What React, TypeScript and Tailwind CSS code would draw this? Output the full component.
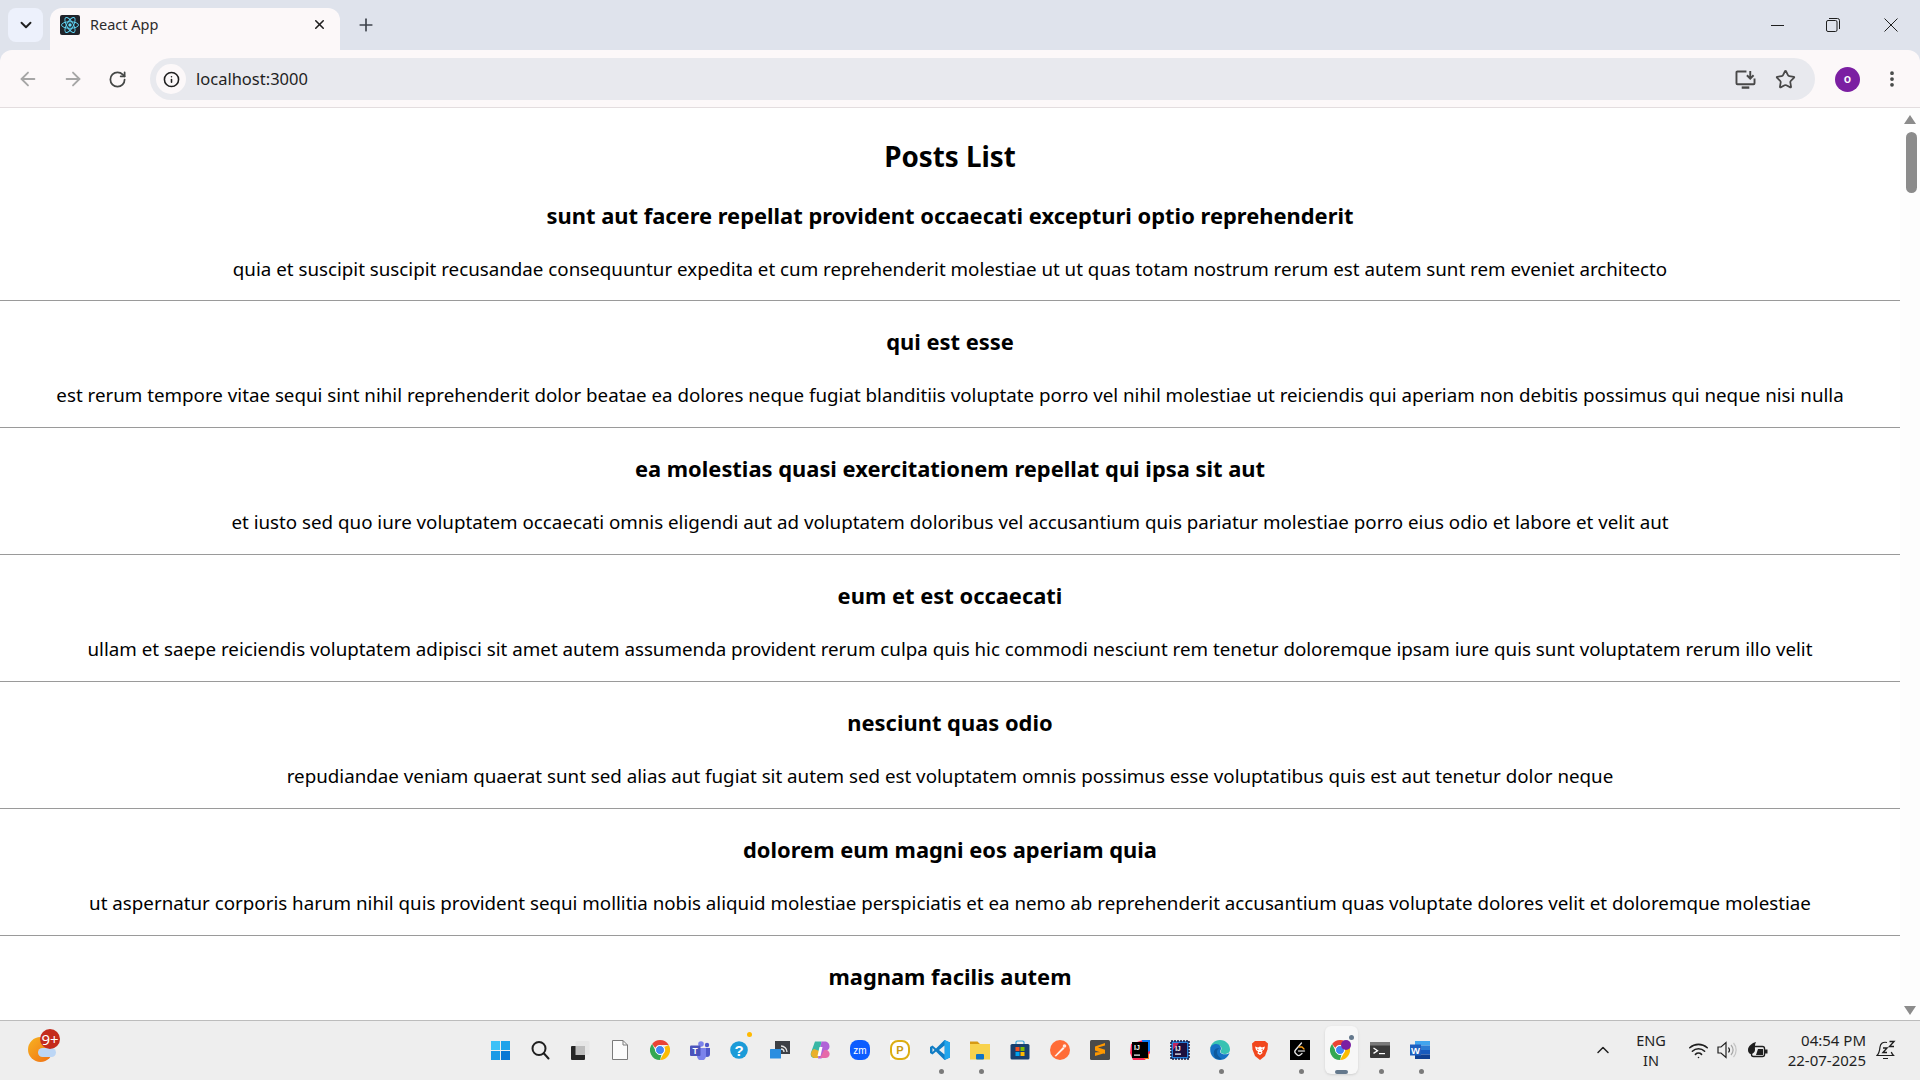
import React from 'react';
import { ArrowLeft, ArrowRight, ChevronDown, ChevronUp, Info, MoreVertical, Plus, RotateCw, Star, Wifi, X } from 'lucide-react';

const posts = [
  {
    title: 'sunt aut facere repellat provident occaecati excepturi optio reprehenderit',
    body: 'quia et suscipit suscipit recusandae consequuntur expedita et cum reprehenderit molestiae ut ut quas totam nostrum rerum est autem sunt rem eveniet architecto',
  },
  {
    title: 'qui est esse',
    body: 'est rerum tempore vitae sequi sint nihil reprehenderit dolor beatae ea dolores neque fugiat blanditiis voluptate porro vel nihil molestiae ut reiciendis qui aperiam non debitis possimus qui neque nisi nulla',
  },
  {
    title: 'ea molestias quasi exercitationem repellat qui ipsa sit aut',
    body: 'et iusto sed quo iure voluptatem occaecati omnis eligendi aut ad voluptatem doloribus vel accusantium quis pariatur molestiae porro eius odio et labore et velit aut',
  },
  {
    title: 'eum et est occaecati',
    body: 'ullam et saepe reiciendis voluptatem adipisci sit amet autem assumenda provident rerum culpa quis hic commodi nesciunt rem tenetur doloremque ipsam iure quis sunt voluptatem rerum illo velit',
  },
  {
    title: 'nesciunt quas odio',
    body: 'repudiandae veniam quaerat sunt sed alias aut fugiat sit autem sed est voluptatem omnis possimus esse voluptatibus quis est aut tenetur dolor neque',
  },
  {
    title: 'dolorem eum magni eos aperiam quia',
    body: 'ut aspernatur corporis harum nihil quis provident sequi mollitia nobis aliquid molestiae perspiciatis et ea nemo ab reprehenderit accusantium quas voluptate dolores velit et doloremque molestiae',
  },
  {
    title: 'magnam facilis autem',
    body: '',
  },
];

const ReactLogo = () => (
  <svg viewBox="0 0 20 20" className="w-5 h-5">
    <rect width="20" height="20" rx="2" fill="#20232a" />
    <circle cx="10" cy="10" r="1.7" fill="#61dafb" />
    <g fill="none" stroke="#61dafb" strokeWidth="0.9">
      <ellipse cx="10" cy="10" rx="8.5" ry="3.3" />
      <ellipse cx="10" cy="10" rx="8.5" ry="3.3" transform="rotate(60 10 10)" />
      <ellipse cx="10" cy="10" rx="8.5" ry="3.3" transform="rotate(120 10 10)" />
    </g>
  </svg>
);

const ChromeIcon = () => (
  <svg viewBox="0 0 20 20" className="w-5 h-5">
    <path d="M10 0a10 10 0 0 1 8.7 5H10a5 5 0 0 0-4.6 3L2.1 3.9A10 10 0 0 1 10 0z" fill="#ea4335" />
    <path d="M18.7 5A10 10 0 0 1 10 20l4.3-7.5A5 5 0 0 0 14.3 7z" fill="#fbbc04" />
    <path d="M10 20A10 10 0 0 1 2.1 3.9l4.3 8.6a5 5 0 0 0 5 2.3z" fill="#34a853" />
    <circle cx="10" cy="10" r="4.5" fill="#4285f4" stroke="#fff" strokeWidth="1" />
  </svg>
);

const TeamsIcon = () => (
  <svg viewBox="0 0 20 20" className="w-5 h-5">
    <circle cx="11" cy="4" r="2.8" fill="#7b83eb" />
    <circle cx="17" cy="5" r="2.2" fill="#5059c9" />
    <path d="M14 8h6v6a3 3 0 0 1-6 0z" fill="#5059c9" />
    <path d="M7 8h9v8a4 4 0 0 1-9 0z" fill="#7b83eb" />
    <rect x="0" y="5.5" width="10.5" height="10.5" rx="1" fill="#4b53bc" />
    <text x="5.2" y="14" textAnchor="middle" fontSize="8.5" fontWeight="700" fill="#fff" fontFamily="Liberation Sans">T</text>
  </svg>
);

const HelpIcon = () => (
  <svg viewBox="0 0 20 20" className="w-5 h-5">
    <circle cx="9" cy="10" r="8.8" fill="#1b9bd8" />
    <text x="9" y="15.5" textAnchor="middle" fontSize="15" fontWeight="700" fill="#fff" fontFamily="Liberation Sans">?</text>
  </svg>
);

const CastIcon = () => (
  <svg viewBox="0 0 20 20" className="w-5 h-5">
    <rect x="5" y="1" width="15" height="13" fill="#3d4045" />
    <path d="M11 6a6 6 0 0 1 6 6M11 9a3 3 0 0 1 3 3" fill="none" stroke="#e5e5e5" strokeWidth="1.3" />
    <rect x="0" y="9" width="11" height="9.5" rx="0.5" fill="#2a8ee0" />
  </svg>
);

const CopilotIcon = () => (
  <svg viewBox="0 0 20 20" className="w-5 h-5">
    <path d="M5 1.5h6.5L8 18H4.5C1.5 18 0 15.5 1 12.5z" fill="#38b7a5" />
    <path d="M4 9c-2 1-3 3-3 5 0 2.500 2 4 4 4h3l1.500-7z" fill="#e9b02c" />
    <path d="M11.500 1.500h3c3 0 5 2 5 5 0 2-1 3-2 3.500l-6 8.500H8z" fill="#b063d8" />
    <path d="M14 10h3c2 1 3 3 2.500 5-.5 2-2 3-4 3H10z" fill="#e66aa9" />
    <path d="M9.500 7h3l-2 9h-3z" fill="#fff" />
  </svg>
);

const ZoomIcon = () => (
  <svg viewBox="0 0 20 20" className="w-5 h-5">
    <rect width="20" height="20" rx="8" fill="#0b5cff" />
    <text x="10" y="13.5" textAnchor="middle" fontSize="10" fill="#fff" fontFamily="Liberation Sans">zm</text>
  </svg>
);

const ParkingIcon = () => (
  <svg viewBox="0 0 20 20" className="w-5 h-5">
    <rect width="20" height="20" fill="#fff" />
    <rect x="1" y="1" width="18" height="18" rx="7" fill="#fff" stroke="#dcae12" strokeWidth="2" />
    <text x="10" y="14.300" textAnchor="middle" fontSize="11" fontWeight="700" fill="#c99a10" fontFamily="Liberation Sans">P</text>
  </svg>
);

const VsCodeIcon = () => (
  <svg viewBox="0 0 20 20" className="w-5 h-5">
    <path d="M14.500 0 20 2.500v15L14.500 20 6 11.500 2.500 14.500 0 13V7l2.500-1.500L6 8.500z" fill="#0f7cc4" />
    <path d="M14.500 0 20 2.500v15L14.500 20z" fill="#22a5ec" />
    <path d="M14.500 5.500v9L9 10z" fill="#eeeeee" />
    <path d="M2.500 8v4L4.500 10z" fill="#eeeeee" />
  </svg>
);

const FolderIcon = () => (
  <svg viewBox="0 0 20 20" className="w-5 h-5">
    <path d="M0 1.500h7.500L10 4h10v4H0z" fill="#d69a14" />
    <rect x="0" y="4" width="20" height="15.500" fill="#f8d24d" />
    <rect x="6" y="14" width="8" height="5.500" rx="1" fill="#1173c7" />
  </svg>
);

const StoreIcon = () => (
  <svg viewBox="0 0 20 20" className="w-5 h-5">
    <path d="M6 4V2a2 2 0 0 1 2-1h4a2 2 0 0 1 2 1v2" fill="none" stroke="#3ca6dc" strokeWidth="1.200" />
    <rect x="0.500" y="4" width="19" height="15.500" rx="1.500" fill="#18406f" />
    <rect x="5.500" y="7" width="4" height="4" fill="#f25022" />
    <rect x="10.500" y="7" width="4" height="4" fill="#7fba00" />
    <rect x="5.500" y="12" width="4" height="4" fill="#00a4ef" />
    <rect x="10.500" y="12" width="4" height="4" fill="#ffb900" />
  </svg>
);

const PostmanIcon = () => (
  <svg viewBox="0 0 20 20" className="w-5 h-5">
    <circle cx="10" cy="10" r="10" fill="#ff6c37" />
    <path d="M4.500 16 13 7l1.500 1.500L6 16.500z" fill="#fff" opacity="0.9" />
    <circle cx="14.500" cy="6" r="1.800" fill="#fff" opacity="0.85" />
  </svg>
);

const SublimeIcon = () => (
  <svg viewBox="0 0 20 20" className="w-5 h-5">
    <rect width="20" height="20" rx="1.500" fill="#4a4a4a" />
    <path d="M15 3 5 6.500v4l10 3.400V9.700L8 7.500l7-2zM5 12.500v3.500L15 13l-3-1.200z" fill="#ff9800" />
  </svg>
);

const IdeaIcon = () => (
  <svg viewBox="0 0 20 20" className="w-5 h-5">
    <path d="M1 4 13 0h7v13l-5 7H3L0 13z" fill="#fe2857" />
    <path d="M12 0h8v11l-6 2z" fill="#087cfa" />
    <rect x="14" y="14" width="5" height="5" fill="#fe7a16" />
    <rect x="2" y="2" width="16" height="16" fill="#000" />
    <text x="7" y="10" textAnchor="middle" fontSize="7" fontWeight="700" fill="#fff" fontFamily="Liberation Sans">IJ</text>
    <rect x="4" y="14.500" width="6" height="1.200" fill="#fff" />
  </svg>
);

const RiderIcon = () => (
  <svg viewBox="0 0 20 20" className="w-5 h-5">
    <rect x="1" y="1" width="18" height="18" fill="#2a7fd8" stroke="#1a1a40" strokeWidth="1.500" strokeDasharray="2 1" />
    <rect x="3" y="3" width="14" height="14" fill="#1d0f3f" />
    <path d="M3 3h6L3 10z" fill="#c0275f" />
    <text x="8" y="10.500" textAnchor="middle" fontSize="6.500" fontWeight="700" fill="#fff" fontFamily="Liberation Sans">IJ</text>
    <rect x="5" y="13.500" width="6" height="1.200" fill="#fff" />
  </svg>
);

const EdgeIcon = () => (
  <svg viewBox="0 0 20 20" className="w-5 h-5">
    <path d="M10 0c6 0 10 4.500 10 9.500 0 3-2.500 4.500-5.500 4.500-2 0-4-1-4-2.500 0-1 1-1.200 1-3C11.500 6 9 4.500 6.500 5 3 5.500.5 8 .2 9 .5 4 4.500 0 10 0z" fill="#38c2b2" />
    <path d="M.2 9.500C.2 5.500 4 3.800 6.500 4c3 .2 4.500 2.500 4.500 4.500 0 1.500-1 2-1 3 0 2 3 3 5.500 2.800 1.500 0 3-.5 4-1.500C18 17.500 14.500 20 10 20 4.500 20 .2 15.500.2 9.500z" fill="#1673c5" />
    <path d="M6 18.500C3.500 16 3 12 5 9.500c1-1 3-1.500 4.500-1-2.500.500-3 3.500-2 6 .7 1.800 2 3 4.500 4.500-2 .5-4.300.3-6-.5z" fill="#0f5a9e" />
  </svg>
);

const BraveIcon = () => (
  <svg viewBox="0 0 20 20" className="w-5 h-5">
    <path d="M5 1h10l3 2.500-.5 6L15 16l-5 4-5-4-2.500-6.500L2 3.500z" fill="#f1471d" />
    <path d="M5 6.500 8 7.500l2-1 2 1 3-1-1 3-2 1.500 .5 2L10 15l-2.500-1.500.5-2-2-1.500z" fill="#fff" />
    <path d="M7 8.500 9 9.500l-1.500 .5zM13 8.500 11 9.500l1.500 .5zM8.500 12h3L10 13.500z" fill="#f1471d" />
  </svg>
);

const LeetcodeIcon = () => (
  <svg viewBox="0 0 20 20" className="w-5 h-5">
    <rect width="20" height="20" fill="#000" />
    <path d="M11.500 3 5.500 10c-.8 1-.8 2.500 0 3.300l1.500 1.500c1 1 2.500 1 3.500 0L12 13.500" fill="none" stroke="#e5e5e5" strokeWidth="1.300" strokeLinecap="round" />
    <path d="M8.500 11h6" stroke="#b3b3b3" strokeWidth="1.300" strokeLinecap="round" />
    <path d="M9 7l3 0 2 2" fill="none" stroke="#ffa116" strokeWidth="1.300" strokeLinecap="round" />
  </svg>
);

const ChromeProfileIcon = () => (
  <div className="relative w-5 h-5">
    <ChromeIcon />
    <span className="absolute top-0 -right-[1px] w-[10px] h-[10px] rounded-full bg-[#7b1fa2]" />
    <span className="absolute -top-[5px] -right-[4px] w-[5px] h-[5px] rounded-full bg-[#64788c]" />
  </div>
);

const TerminalIcon = () => (
  <svg viewBox="0 0 20 20" className="w-5 h-5">
    <rect y="2" width="20" height="16" rx="1" fill="#3a3a3a" />
    <rect y="2" width="20" height="3.500" fill="#7a7a7a" />
    <path d="m3.500 8 4 2.700-4 2.700" fill="none" stroke="#fff" strokeWidth="1.300" />
    <rect x="9" y="13" width="6" height="1.200" fill="#fff" />
  </svg>
);

const WordIcon = () => (
  <svg viewBox="0 0 20 20" className="w-5 h-5">
    <rect x="5" y="1" width="15" height="4.500" fill="#41a5ee" />
    <rect x="5" y="5.500" width="15" height="4.500" fill="#2b7cd3" />
    <rect x="5" y="10" width="15" height="4.500" fill="#185abd" />
    <rect x="5" y="14.500" width="15" height="4.500" fill="#103f91" />
    <rect x="0" y="4.500" width="11" height="11" fill="#1e5fbf" />
    <text x="5.500" y="13.500" textAnchor="middle" fontSize="9.500" fontWeight="700" fill="#fff" fontFamily="Liberation Sans">W</text>
  </svg>
);

const taskbarIcons: { key: string; icon: React.ReactNode; dot?: boolean; active?: boolean; notify?: boolean }[] = [
  {
    key: 'start',
    icon: (
      <div className="grid grid-cols-2 gap-[1px] w-[19px] h-[19px]">
        <span className="bg-[#3cc1f7]" />
        <span className="bg-[#1ea3ea]" />
        <span className="bg-[#1a9ae6]" />
        <span className="bg-[#0a78d4]" />
      </div>
    ),
  },
  {
    key: 'search',
    icon: (
      <svg viewBox="0 0 20 20" className="w-5 h-5" fill="none" stroke="#1f1f1f" strokeWidth="2">
        <circle cx="9" cy="8.500" r="6.500" />
        <path d="m14 13.500 4.500 5" strokeLinecap="round" />
      </svg>
    ),
  },
  {
    key: 'taskview',
    icon: (
      <svg viewBox="0 0 20 20" className="w-5 h-5">
        <rect x="5.500" y="1" width="14" height="14" rx="1" fill="#e6e6e6" />
        <rect x="1" y="6" width="14" height="14" rx="1" fill="#262626" />
        <rect x="5.500" y="6" width="9.500" height="9" fill="#bdbdbd" />
      </svg>
    ),
  },
  {
    key: 'file',
    icon: (
      <svg viewBox="0 0 20 20" className="w-5 h-5">
        <path d="M2.500.5h10.500l4.500 4.500v14.500h-15z" fill="#fbfbfb" stroke="#7a7a7a" />
        <path d="M13 .5V5h4.500" fill="none" stroke="#7a7a7a" />
      </svg>
    ),
  },
  { key: 'chrome', icon: <ChromeIcon /> },
  { key: 'teams', icon: <TeamsIcon /> },
  { key: 'help', icon: <HelpIcon />, notify: true },
  { key: 'cast', icon: <CastIcon /> },
  { key: 'copilot', icon: <CopilotIcon /> },
  { key: 'zoom', icon: <ZoomIcon /> },
  { key: 'parking', icon: <ParkingIcon /> },
  { key: 'vscode', icon: <VsCodeIcon />, dot: true },
  { key: 'folder', icon: <FolderIcon />, dot: true },
  { key: 'store', icon: <StoreIcon /> },
  { key: 'postman', icon: <PostmanIcon /> },
  { key: 'sublime', icon: <SublimeIcon /> },
  { key: 'idea', icon: <IdeaIcon /> },
  { key: 'rider', icon: <RiderIcon /> },
  { key: 'edge', icon: <EdgeIcon />, dot: true },
  { key: 'brave', icon: <BraveIcon /> },
  { key: 'leetcode', icon: <LeetcodeIcon />, dot: true },
  { key: 'chrome2', icon: <ChromeProfileIcon />, active: true },
  { key: 'terminal', icon: <TerminalIcon />, dot: true },
  { key: 'word', icon: <WordIcon />, dot: true },
];

const TabStrip = () => (
  <div className="h-[50px] bg-[#dfe3ec] flex shrink-0 pt-2">
    <div className="ml-2 w-[35px] h-[34px] rounded-lg bg-[#edf1fc] flex items-center justify-center">
      <ChevronDown className="w-[18px] h-[18px] text-[#1f1f1f]" strokeWidth={2.500} />
    </div>
    <div className="ml-[7px] w-[290px] h-[42px] rounded-t-xl bg-[#fcf8f9] flex items-center pl-[10px] pr-[13px] pb-[9px]">
      <ReactLogo />
      <span className="ml-[10px] text-[14.500px] text-[#2c2c2c] flex-1">React App</span>
      <X className="w-[15px] h-[15px] text-[#1f1f1f]" strokeWidth={2.500} />
    </div>
    <div className="ml-[9px] w-[34px] h-[34px] flex items-center justify-center">
      <Plus className="w-5 h-5 text-[#3f444c]" strokeWidth={2} />
    </div>
    <div className="ml-auto flex h-[34px] items-center">
      <div className="w-[56px] flex justify-center">
        <div className="w-[13px] h-[1px] bg-[#1f1f1f]" />
      </div>
      <div className="w-[56px] flex justify-center mr-[1px]">
        <svg viewBox="0 0 14 14" className="w-[14px] h-[14px]" fill="none" stroke="#1f1f1f">
          <rect x="0.500" y="2.500" width="10.500" height="11" rx="1.500" />
          <path d="M3 .5h8.500a2 2 0 0 1 2 2V11" />
        </svg>
      </div>
      <div className="w-[58px] flex justify-center">
        <svg viewBox="0 0 14 14" className="w-[14px] h-[14px]" fill="none" stroke="#1f1f1f">
          <path d="m.5.5 13 13m0-13-13 13" />
        </svg>
      </div>
    </div>
  </div>
);

const Toolbar = () => (
  <div className="bg-[#dfe3ec] shrink-0">
    <div className="h-[58px] bg-[#fcf8f9] rounded-t-xl border-b border-[#e3dddf] flex items-center pt-[1px]">
      <div className="w-[150px] flex items-center">
        <ArrowLeft className="ml-[17px] w-[22px] h-[22px] text-[#a6a6a6]" strokeWidth={2} />
        <ArrowRight className="ml-[23px] w-[22px] h-[22px] text-[#a6a6a6]" strokeWidth={2} />
        <RotateCw className="ml-[24px] w-[19px] h-[19px] text-[#444746]" strokeWidth={2.200} />
      </div>
      <div className="w-[1665px] h-[42px] rounded-full bg-[#e8e9ee] flex items-center pl-[6px] pr-[17px]">
        <div className="w-[30px] h-[30px] rounded-full bg-[#fcf8f9] flex items-center justify-center">
          <Info className="w-[17px] h-[17px] text-[#1f1f1f]" strokeWidth={2.200} />
        </div>
        <span className="ml-[10px] text-[16.500px] text-[#1f1f1f] flex-1">localhost:3000</span>
        <svg viewBox="0 0 22 20" className="w-[21px] h-[19px] mr-[19px]" fill="none" stroke="#484848" strokeWidth="2">
          <path d="M12 1.500H2.500a1 1 0 0 0-1 1V14a1 1 0 0 0 1 1h17a1 1 0 0 0 1-1V9" />
          <path d="M7 18.500h8" strokeWidth="2.500" />
          <path d="M16 1v8m-3.500-3.500L16 9l3.500-3.500" />
        </svg>
        <Star className="w-[21px] h-[21px] text-[#484848] mr-[2px]" strokeWidth={2} />
      </div>
      <div className="ml-[20px] w-[25px] h-[25px] rounded-full bg-[#7b1fa2] flex items-center justify-center text-white text-[12px] font-semibold">
        o
      </div>
      <MoreVertical className="ml-[22px] w-[20px] h-[20px] text-[#444746]" strokeWidth={2.500} />
    </div>
  </div>
);

const Scrollbar = () => (
  <div className="w-5 shrink-0 bg-[#fdfdfd] flex flex-col items-center">
    <div className="mt-[7px] w-0 h-0 border-x-[6px] border-x-transparent border-b-[9px] border-b-[#8b8b8b]" />
    <div className="mt-[8px] ml-[2px] w-[11px] h-[61px] rounded-full bg-[#8b8b8b]" />
    <div className="mt-auto mb-[5px] w-0 h-0 border-x-[6px] border-x-transparent border-t-[9px] border-t-[#8b8b8b]" />
  </div>
);

const PostsList = () => (
  <div className="flex-1 min-h-0 flex bg-white">
    <div className="flex-1 overflow-hidden text-center text-black">
      <h1 className="mt-[28.500px] text-[27.800px] leading-[38px] font-bold">Posts List</h1>
      {posts.map((post) => (
        <div key={post.title} className={post.body ? 'border-b border-[#9a9a9a] h-[126.900px]' : ''}>
          <h3 className="pt-[25px] text-[21.900px] leading-[32px] font-bold">{post.title}</h3>
          {post.body && <p className="mt-[21px] text-[18.750px] leading-[32px]">{post.body}</p>}
        </div>
      ))}
    </div>
    <Scrollbar />
  </div>
);

const Taskbar = () => (
  <div className="h-[60px] shrink-0 bg-[#eeeeee] border-t border-[#bcbcbc] flex items-center text-[#1f1f1f]">
    <div className="w-[480px] h-full pt-[16px] pl-[28px] flex items-start">
      <div className="relative w-[28px] h-[25px]">
        <div className="w-[25px] h-[25px] rounded-full bg-gradient-to-br from-[#f7b321] to-[#ee6c15]" />
        <div className="absolute left-[10px] top-[11px] w-[18px] h-[9px] rounded-full bg-[#bcd6f5]" />
        <div className="absolute -top-[8px] left-[12px] w-[20px] h-[20px] rounded-full bg-[#c42b1c] text-white text-[15px] leading-[20px] text-center">
          9+
        </div>
      </div>
    </div>
    <div className="flex h-full">
      {taskbarIcons.map((item) => (
        <div key={item.key} className="w-10 h-full pb-[1px] flex items-center justify-center relative">
          {item.active && <div className="absolute left-[5px] right-[2px] top-[5px] bottom-[6px] rounded-md bg-[#f7f7f7] shadow-sm" />}
          <div className="relative">{item.icon}</div>
          {item.notify && <span className="absolute top-[11px] right-[8px] w-[5px] h-[5px] rounded-full bg-[#ffb900]" />}
          {item.dot && <span className="absolute bottom-[6px] left-[19px] w-[5px] h-[5px] rounded-full bg-[#7a7a7a]" />}
          {item.active && <span className="absolute bottom-[6px] left-[15px] w-[13px] h-[4px] rounded-full bg-[#64788c]" />}
        </div>
      ))}
    </div>
    <div className="flex-1 flex items-center pb-[1px]">
      <ChevronUp className="ml-[153px] w-[20px] h-[20px]" strokeWidth={1.800} />
      <div className="ml-[15px] w-[46px] text-center text-[14.500px] leading-[20px]">
        <div>ENG</div>
        <div>IN</div>
      </div>
      <Wifi className="ml-[14px] w-[21px] h-[21px]" strokeWidth={1.800} />
      <svg viewBox="0 0 21 18" className="ml-[8px] w-[21px] h-[18px]" fill="none" stroke="#1f1f1f" strokeWidth="1.200">
        <path d="M1 6h3l5-4.500v15L4 12H1z" />
        <path d="M11.500 6.500c1.200 1.500 1.200 3.500 0 5" />
        <path d="M14 4c2.500 3 2.500 7 0 10" stroke="#a8a8a8" />
        <path d="M16.500 2c3.500 4 3.500 10 0 14" stroke="#c4c4c4" />
      </svg>
      <svg viewBox="0 0 21 17" className="ml-[9px] w-[21px] h-[17px]">
        <path d="M9 0C5 1 1 4 1 8c0 2 1 3.500 2.500 4C6 12 8 10 8 8c0-3-.5-5 1-8z" fill="#1f1f1f" />
        <rect x="4.500" y="4.500" width="13" height="10" rx="2" fill="none" stroke="#1f1f1f" strokeWidth="1.400" />
        <path d="M9 13l2-6h5v6z" fill="#1f1f1f" />
        <rect x="18" y="7.500" width="2.500" height="4" fill="#1f1f1f" />
      </svg>
      <div className="ml-[8px] w-[90px] text-right text-[15px] leading-[20px] whitespace-nowrap">
        <div>04:54 PM</div>
        <div>22-07-2025</div>
      </div>
      <svg viewBox="0 0 20 20" className="ml-[10px] w-[20px] h-[20px]" fill="none" stroke="#1f1f1f" strokeWidth="1.200">
        <path d="M11 2.500C7 1.500 4.500 3.500 4 7c-.3 3-.5 6-3 8.500h16.500c-1-1-1.800-2-2.200-3.500M7 18.500h5" />
        <path d="M7 8h4l-4 4.500h4" strokeWidth="1.400" />
        <path d="M13.500 1.500h4.500l-4.500 5h4.500" strokeWidth="1.400" />
      </svg>
    </div>
  </div>
);

export default function App() {
  return (
    <div
      className="w-[1920px] h-screen overflow-hidden flex flex-col"
      style={{ fontFamily: '"Noto Sans", "Open Sans", sans-serif' }}
    >
      <TabStrip />
      <Toolbar />
      <PostsList />
      <Taskbar />
    </div>
  );
}
